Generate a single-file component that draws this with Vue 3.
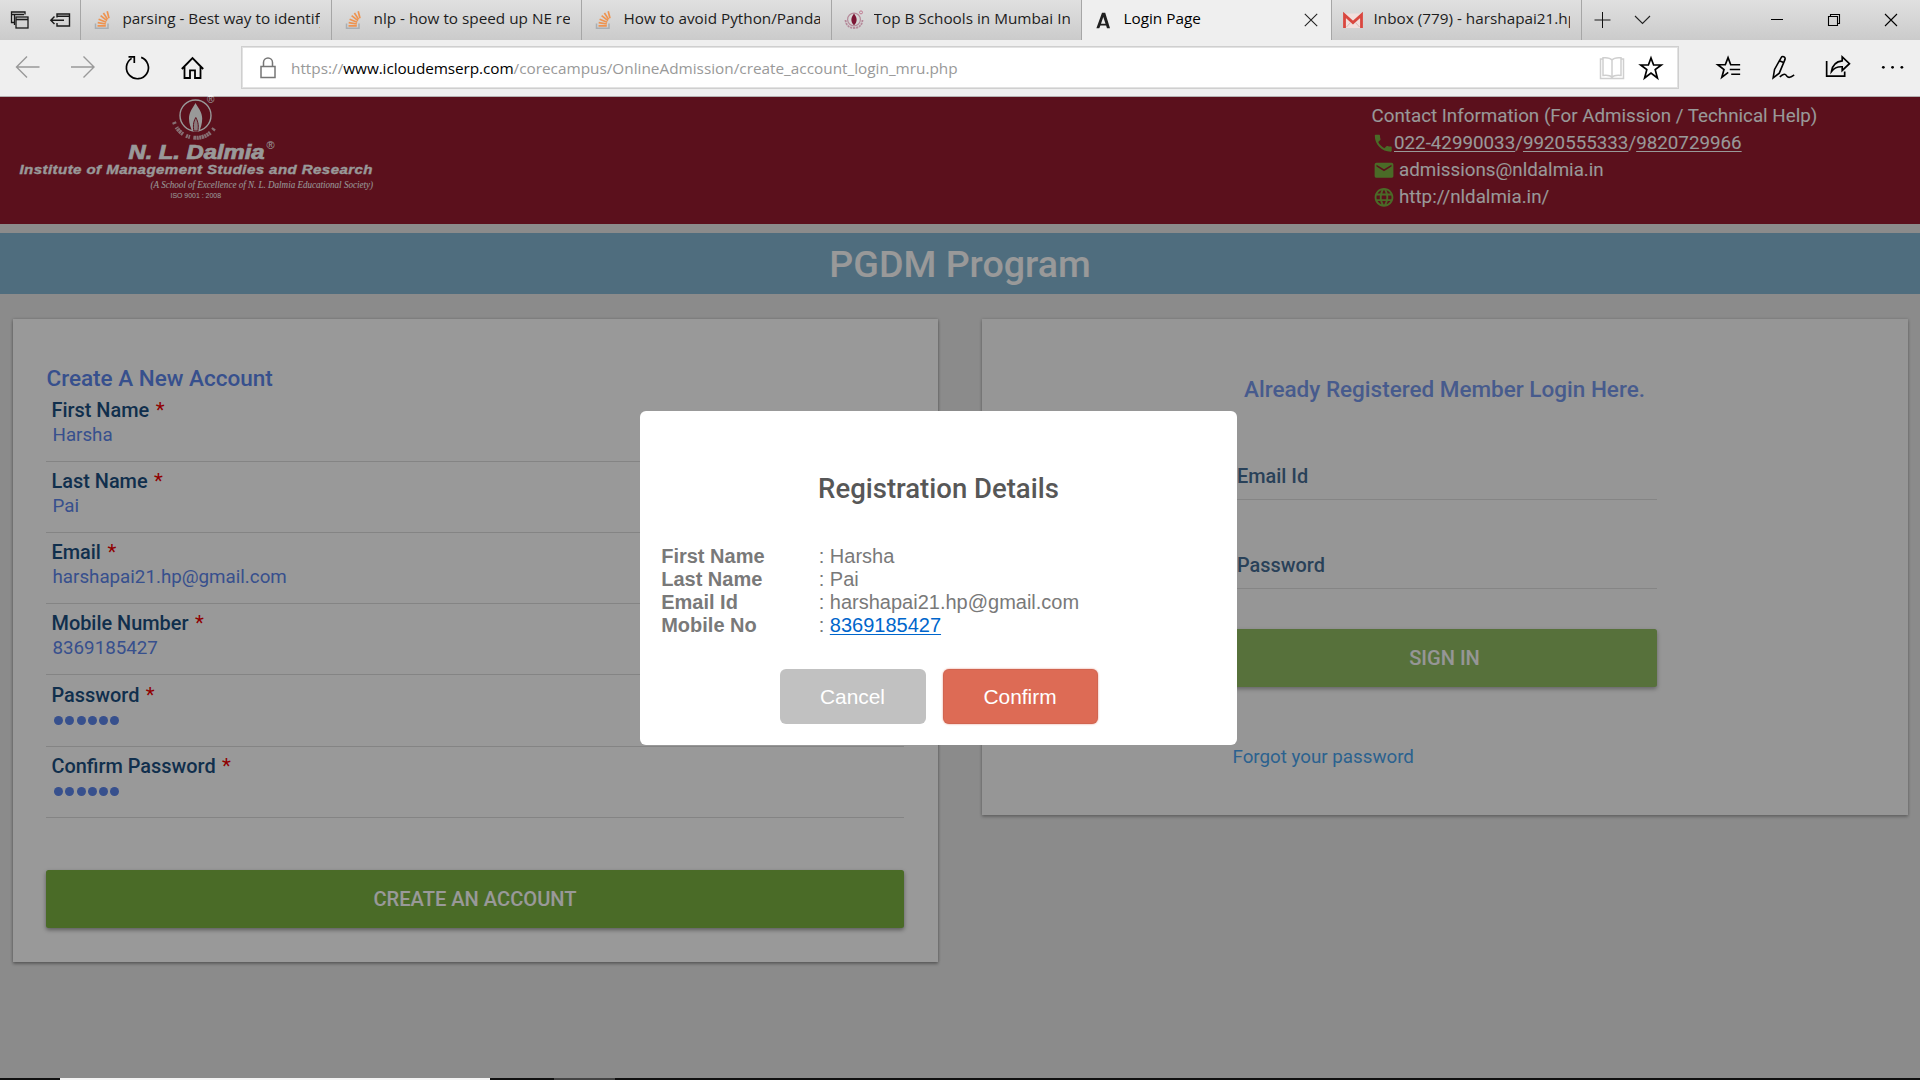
<script setup>
const tabs = [
  { icon: 'stack', title: 'parsing - Best way to identify', width: 251 },
  { icon: 'stack', title: 'nlp - how to speed up NE recognition', width: 250 },
  { icon: 'stack', title: 'How to avoid Python/Pandas', width: 250 },
  { icon: 'school', title: 'Top B Schools in Mumbai India', width: 250 },
  { icon: 'login', title: 'Login Page', width: 250, active: true },
  { icon: 'gmail', title: 'Inbox (779) - harshapai21.hp@gmail.com', width: 251 },
]

const fields = [
  { label: 'First Name', value: 'Harsha' },
  { label: 'Last Name', value: 'Pai' },
  { label: 'Email', value: 'harshapai21.hp@gmail.com' },
  { label: 'Mobile Number', value: '8369185427' },
  { label: 'Password', dots: 6 },
  { label: 'Confirm Password', dots: 6 },
]

const details = [
  { label: 'First Name', value: 'Harsha' },
  { label: 'Last Name', value: 'Pai' },
  { label: 'Email Id', value: 'harshapai21.hp@gmail.com' },
  { label: 'Mobile No', value: '8369185427', link: true },
]
</script>

<template>
  <div class="window">
    <header class="tabbar">
      <div class="tab-tools">
        <svg width="40" height="40" viewBox="0 0 40 40" fill="none" stroke="#1a1a1a" stroke-width="1.3">
          <path d="M14 22.5H11.5V12H25V14.5M11.5 14.5H24M14.5 25V14.8H15" />
          <rect x="16" y="17" width="12" height="11" /><path d="M16 19.5H28" stroke-width="1.6" />
        </svg>
        <svg width="40" height="40" viewBox="0 0 40 40" fill="none" stroke="#1a1a1a" stroke-width="1.4">
          <path d="M17 17.5V14H29.5V26H17V23M17 16.2H29.5M11 20.3H24M14.5 16.5L10.8 20.3L14.5 24" />
        </svg>
      </div>
      <div v-for="(tab, i) in tabs" :key="i" class="tab" :class="{ active: tab.active }" :style="{ width: tab.width + 'px' }">
        <svg v-if="tab.icon === 'stack'" class="favicon" width="20" height="20" viewBox="0 0 20 20" fill="none">
          <path d="M2.5 13.5V18.3H15V13.5" stroke="#a9aeb3" stroke-width="1.5" />
          <g stroke="#ee9350" stroke-width="1.7" transform="translate(-1)">
            <path d="M5.5 15.8H13.8M5.7 12.6L13.9 14M6.6 9.2L14.3 12.2M8.6 5.6L15 10.6M11.4 3L15.6 9.4M15.2 1.2L17 8.2" />
          </g>
        </svg>
        <svg v-else-if="tab.icon === 'school'" class="favicon" width="20" height="20" viewBox="0 0 20 20" fill="none">
          <circle cx="10" cy="9.5" r="6.4" stroke="#b68a9a" stroke-width="1.2" />
          <path d="M10 3.5C6.5 8 6.5 12 10 15.2C13.5 12 13.5 8 10 3.5Z" fill="#7d1635" />
          <path d="M1.5 10C2 15 5 18 10 18S18 15 18.5 10" stroke="#b5899a" stroke-width="1.8" stroke-dasharray="2.2 .8" />
          <circle cx="17" cy="2.4" r="1.5" stroke="#c07b93" />
        </svg>
        <svg v-else-if="tab.icon === 'login'" class="favicon" width="20" height="20" viewBox="0 0 20 20">
          <path fill="#202020" fill-rule="evenodd" d="M8 2.8H11.2L16 18.3H13L12.1 15.5H6.4L5.3 18.3H2.4ZM9.3 7L7 13.8H11.5Z" />
        </svg>
        <svg v-else class="favicon" width="22" height="20" viewBox="0 0 22 20">
          <rect x="0" y="3.5" width="20" height="14.5" rx="1" fill="#f2dfdd" />
          <path d="M1.5 18V5L10 12.6L18.5 5V18" fill="none" stroke="#d9473f" stroke-width="2.8" />
          <path d="M3.5 17L8 12M16.5 17L12 12" stroke="#d8b9b6" fill="none" />
        </svg>
        <span class="tab-title">{{ tab.title }}</span>
        <svg v-if="tab.active" class="tab-close" width="14" height="14" viewBox="0 0 14 14" stroke="#222" stroke-width="1.1"><path d="M.8.8L13.2 13.2M13.2.8L.8 13.2" /></svg>
      </div>
      <div class="tab-actions">
        <svg width="40" height="40" viewBox="0 0 40 40" fill="none"><path d="M12.5 20H28.5" stroke="#666" stroke-width="1.7" /><path d="M20.5 12V28" stroke="#111" /></svg>
        <svg width="40" height="40" viewBox="0 0 40 40" fill="none" stroke="#222" stroke-width="1.1"><path d="M13 16L20.5 23.5L28 16" /></svg>
      </div>
      <div class="win-controls">
        <svg width="57" height="40" viewBox="0 0 57 40"><path d="M22 19.5H34" stroke="#000" /></svg>
        <svg width="57" height="40" viewBox="0 0 57 40" fill="none" stroke="#000" stroke-width="1.1"><path d="M22.5 16.5H31.5V25.5H22.5ZM24.5 16.5V14.5H33.5V23.5H31.5" /></svg>
        <svg width="57" height="40" viewBox="0 0 57 40" stroke="#000" stroke-width="1.1"><path d="M22 14L34 26M34 14L22 26" /></svg>
      </div>
    </header>

    <nav class="toolbar">
      <div class="nav-icons">
        <svg width="55" height="54" viewBox="0 0 55 54" fill="none" stroke="#999" stroke-width="1.4"><path d="M39.5 27H17M27 16.5L16.5 27L27 37.5" /></svg>
        <svg width="55" height="54" viewBox="0 0 55 54" fill="none" stroke="#999" stroke-width="1.4"><path d="M16 27H38.5M28.5 16.5L39 27L28.5 37.5" /></svg>
        <svg width="55" height="54" viewBox="0 0 55 54" fill="none" stroke="#000" stroke-width="1.7"><path d="M31.2 17.4A11 11 0 1 1 21.6 18.4M18.5 16.8H24.3V23" /></svg>
        <svg width="55" height="54" viewBox="0 0 55 54" fill="none" stroke="#000" stroke-width="1.8"><path d="M16.8 29L27.5 18L38.2 29M19.5 27V38H25V30.3H30V38H35.5V27" /></svg>
      </div>
      <div class="address">
        <svg class="lock" width="16" height="22" viewBox="0 0 16 22" fill="none" stroke="#767676" stroke-width="1.5"><rect x="1" y="9.5" width="14" height="11" /><path d="M3.5 9.5V5.5a4.5 4.5 0 0 1 9 0V9.5" /></svg>
        <span class="url"><span class="scheme">https://</span><span class="host">www.icloudemserp.com</span><span class="path">/corecampus/OnlineAdmission/create_account_login_mru.php</span></span>
        <svg class="reader" width="26" height="24" viewBox="0 0 26 24" fill="none" stroke="#cfcfcf" stroke-width="1.5"><path d="M4 3H1.5V22.5H24.5V3H22M13 4C11 1.5 7 1.5 4 1.8V19.5C7 19.2 11 19 13 21.2C15 19 19 19.2 22 19.5V1.8C19 1.5 15 1.5 13 4ZM13 4V21" /></svg>
        <svg class="star" width="26" height="26" viewBox="0 0 26 26" fill="none" stroke="#000" stroke-width="1.7"><path d="M13 3L15.6 10H23.3L17.2 14.7L19.4 23L13 18L6.6 23L8.8 14.7L2.7 10H10.4Z" /></svg>
      </div>
      <div class="tool-icons">
        <svg width="54.5" height="54" viewBox="0 0 55 54" fill="none" stroke="#000" stroke-width="1.7"><path d="M27.5 32.5L21 37.5L23.2 29.5L17 24.7H24.5L27.3 17.5L30 24.7H39.5M29 29.5H39.5M30.5 34.3H39.5" /></svg>
        <svg width="54.5" height="54" viewBox="0 0 55 54" fill="none" stroke="#000" stroke-width="1.6"><path d="M17.3 38L18.7 29.5L25.4 17.5C26.5 15.5 30 16.7 29.3 19.3L23.5 33.2ZM23.5 20.6L28.5 22.6M17.3 38L23.5 33.2M24 37C28 33.5 29.5 33.7 31 36C33 38.5 34.5 37.5 38.5 35" /></svg>
        <svg width="54.5" height="54" viewBox="0 0 55 54" fill="none" stroke="#000" stroke-width="1.7"><path d="M16.8 21V36.2H35V31.5M32.5 16.8L39.8 23.7L32.5 30.5V26.8C27 26.5 24.3 28 21.7 31.5C22.5 25.5 26 21.5 32.5 20.8Z" /></svg>
        <svg width="54.5" height="54" viewBox="0 0 55 54"><g fill="#000"><circle cx="18.5" cy="27.3" r="1.4" /><circle cx="27.8" cy="27.3" r="1.4" /><circle cx="37.2" cy="27.3" r="1.4" /></g></svg>
      </div>
    </nav>

    <main class="page">
      <section class="banner">
        <svg class="logo" width="400" height="127" viewBox="0 0 400 127" fill="#fff">
          <circle cx="195.5" cy="18.5" r="15.5" fill="none" stroke="#fff" stroke-width="1.4" />
          <path d="M195.5 6C193 10.5 189 15 189 21.5C189 27 191 31 192 34H199.5C200.5 31 202.2 27 202.2 21.5C202.2 15 198 10.5 195.5 6Z" />
          <path d="M195.8 20.5C192.9 25.5 193.2 29.5 193.8 34H197.9C198.6 29.5 198.6 25.5 195.8 20.5Z" fill="#e6cdd1" stroke="#981c30" stroke-width="1" />
          <path d="M174 25C178 36 186 40.4 195.5 40.8S213.5 35.5 217.5 25" fill="none" stroke="#fff" stroke-opacity=".7" stroke-width="4" stroke-dasharray="2 3.6 1.6 .5 2.2 .5 2.4 .5 2 3.4 2 .6 1.6 3.4 2.6 .5 2.2 .5 2 .5 2.4 .5 2 .5 2 .5 2 3.5 2.2 20" />
          <text x="207" y="6" font-size="10" font-family="Liberation Sans, sans-serif">®</text>
          <g font-family="Liberation Sans, sans-serif" font-weight="700" font-style="italic" stroke="#fff">
            <text x="128.5" y="62" font-size="19.5" stroke-width=".7" textLength="136" lengthAdjust="spacingAndGlyphs">N. L. Dalmia</text>
            <text x="19.5" y="76.7" font-size="12.6" stroke-width=".3" letter-spacing=".35" textLength="353.5" lengthAdjust="spacingAndGlyphs">Institute of Management Studies and Research</text>
          </g>
          <text x="266.5" y="52" font-size="11" font-family="Liberation Sans, sans-serif">®</text>
          <text x="150.5" y="90.5" font-size="10" font-style="italic" font-family="Liberation Serif, serif" textLength="222.5" lengthAdjust="spacingAndGlyphs">(A School of Excellence of N. L. Dalmia Educational Society)</text>
          <text x="170.5" y="101" font-size="7" font-family="Liberation Sans, sans-serif" textLength="50.5" lengthAdjust="spacingAndGlyphs">ISO 9001 : 2008</text>
        </svg>
        <div class="contact">
          <div class="contact-row">Contact Information (For Admission / Technical Help)</div>
          <div class="contact-row">
            <svg class="ci tight" width="22.5" height="22.5" viewBox="0 0 24 24"><path d="M6.62 10.79c1.44 2.83 3.76 5.14 6.59 6.59l2.2-2.2c.27-.27.67-.36 1.02-.24 1.12.37 2.33.57 3.57.57.55 0 1 .45 1 1V20c0 .55-.45 1-1 1-9.39 0-17-7.61-17-17 0-.55.45-1 1-1h3.5c.55 0 1 .45 1 1 0 1.25.2 2.45.57 3.57.11.35.03.74-.25 1.02l-2.2 2.2z" /></svg>
            <span><a>022-42990033</a>/<a>9920555333</a>/<a>9820729966</a></span>
          </div>
          <div class="contact-row">
            <svg class="ci" width="24" height="22.5" viewBox="0 0 24 24"><path d="M20 4H4c-1.1 0-1.99.9-1.99 2L2 18c0 1.1.9 2 2 2h16c1.1 0 2-.9 2-2V6c0-1.1-.9-2-2-2zm0 4l-8 5-8-5V6l8 5 8-5v2z" /></svg>
            <span>admissions@nldalmia.in</span>
          </div>
          <div class="contact-row">
            <svg class="ci" width="24" height="22.5" viewBox="0 0 24 24"><path d="M11.99 2C6.47 2 2 6.48 2 12s4.47 10 9.99 10C17.52 22 22 17.52 22 12S17.52 2 11.99 2zm6.93 6h-2.95c-.32-1.25-.78-2.45-1.38-3.56 1.84.63 3.37 1.91 4.33 3.56zM12 4.04c.83 1.2 1.48 2.53 1.91 3.96h-3.82c.43-1.43 1.08-2.76 1.91-3.96zM4.26 14C4.1 13.36 4 12.69 4 12s.1-1.36.26-2h3.38c-.08.66-.14 1.32-.14 2 0 .68.06 1.34.14 2H4.26zm.82 2h2.95c.32 1.25.78 2.45 1.38 3.56-1.84-.63-3.37-1.9-4.33-3.56zm2.95-8H5.08c.96-1.66 2.49-2.93 4.33-3.56C8.81 5.55 8.35 6.75 8.03 8zM12 19.96c-.83-1.2-1.48-2.53-1.91-3.96h3.82c-.43 1.43-1.08 2.76-1.91 3.96zM14.34 14H9.66c-.09-.66-.16-1.32-.16-2 0-.68.07-1.35.16-2h4.68c.09.65.16 1.32.16 2 0 .68-.07 1.34-.16 2zm.25 5.56c.6-1.11 1.06-2.31 1.38-3.56h2.95c-.96 1.65-2.49 2.93-4.33 3.56zM16.36 14c.08-.66.14-1.32.14-2 0-.68-.06-1.34-.14-2h3.38c.16.64.26 1.31.26 2s-.1 1.36-.26 2h-3.38z" /></svg>
            <span>http://nldalmia.in/</span>
          </div>
        </div>
      </section>

      <h1 class="program">PGDM Program</h1>

      <div class="cards">
        <section class="card signup">
          <h2>Create A New Account</h2>
          <div v-for="f in fields" :key="f.label" class="field">
            <label>{{ f.label }} <i>*</i></label>
            <div v-if="f.dots" class="value dots"><b v-for="n in f.dots" :key="n"></b></div>
            <div v-else class="value">{{ f.value }}</div>
          </div>
          <button class="btn create">CREATE AN ACCOUNT</button>
        </section>

        <section class="card signin">
          <h2>Already Registered Member Login Here.</h2>
          <div class="login-field">Email Id</div>
          <div class="login-field">Password</div>
          <button class="btn">SIGN IN</button>
          <a class="forgot">Forgot your password</a>
        </section>
      </div>

      <div class="overlay">
        <div class="modal">
          <h3>Registration Details</h3>
          <dl>
            <div v-for="d in details" :key="d.label" class="detail">
              <dt>{{ d.label }}</dt>
              <dd>: <a v-if="d.link">{{ d.value }}</a><template v-else>{{ d.value }}</template></dd>
            </div>
          </dl>
          <div class="modal-actions">
            <button class="cancel">Cancel</button>
            <button class="confirm">Confirm</button>
          </div>
        </div>
      </div>
    </main>
    <footer class="taskbar"><span class="gap"></span><span class="light"></span><span class="gap"></span><span class="mid"></span></footer>
  </div>
</template>

<style>
html, body { margin: 0; overflow: hidden; background: #111; }
</style>

<style scoped>
* { box-sizing: border-box; }
.window { width: 1920px; height: 1080px; display: flex; flex-direction: column; font-family: Roboto, sans-serif; overflow: hidden; }
svg { flex: none; display: block; }

.tabbar { height: 40px; flex: none; display: flex; background: linear-gradient(#e0e0e0, #cbcbcb); font-family: "Open Sans", sans-serif; }
.tab-tools { width: 80px; display: flex; }
.tab { height: 40px; border-left: 1px solid #a6a6a6; display: flex; align-items: center; padding: 0 11px 0 11px; flex: none; }
.tab:nth-child(7) { border-right: 1px solid #a6a6a6; }
.tab.active { background: #efefef; border-left-color: #a6a6a6; padding-right: 13px; }
.favicon { width: 22px; height: 20px; }
.tab-title { flex: 1; margin-left: 8.5px; font-size: 15.3px; line-height: 37px; height: 40px; color: #1d1d1d; white-space: nowrap; overflow: hidden; }
.tab.active .tab-title { color: #000; }
.tab-actions { display: flex; }
.win-controls { display: flex; margin-left: auto; }

.toolbar { height: 57px; flex: none; background: #efefef; border-bottom: 1px solid #b5b0b1; display: flex; }
.nav-icons, .tool-icons { display: flex; }
.nav-icons { width: 241px; }
.tool-icons { margin-left: 22px; }
.address { margin-top: 6px; width: 1438px; height: 43px; border: 1px solid #cfcfcf; background: #fff; display: flex; align-items: center; font-family: "Open Sans", sans-serif; outline: 1px solid #e2e2e2; outline-offset: -2px; }
.lock { margin: 0 0 0 18px; }
.url { margin-left: 15px; font-size: 15.33px; line-height: 42px; color: #999; white-space: nowrap; flex: 1; }
.host { color: #000; letter-spacing: -.08px; }
.reader { margin-right: 13px; }
.star { margin-right: 14px; }

.page { flex: none; height: 981px; background: #e8e8e8; position: relative; }
.banner { height: 127px; background: #981c30; display: flex; justify-content: space-between; }
.logo { overflow: visible; }
.contact { width: 548.5px; padding-top: 6px; color: #fff; font-size: 18.78px; line-height: 27px; }
.contact-row { height: 27px; display: flex; align-items: center; white-space: pre; }
.contact-row a { text-decoration: underline; text-underline-offset: 2px; text-decoration-thickness: 1px; }
.ci { fill: #7cb342; margin-right: 3.5px; }
.ci.tight { margin-right: 0; }
.program { margin: 9px 0 0; height: 61px; background: #84b6d2; color: #fff; font-size: 37.6px; line-height: 63px; font-weight: 500; text-align: center; }

.cards { display: flex; align-items: flex-start; justify-content: space-between; padding: 25px 12px 0 13px; }
.card { background: #fff; box-shadow: 0 2px 3px rgba(0, 0, 0, .3), 0 0 3px rgba(0, 0, 0, .2); }
.card h2 { margin: 0; font-size: 22.5px; line-height: 26px; font-weight: 500; color: #5c85ec; }
.signup { width: 925px; height: 643px; padding: 46px 34px 0 33px; }
.signup h2 { margin-bottom: 7px; padding-left: .5px; }
.field { height: 64px; border-bottom: 1px solid #dcdcdc; margin-bottom: 7px; padding: 1px 0 0 5.5px; }
.field:nth-of-type(5) { margin-top: 8px; }
.field label { display: block; font-size: 19.9px; line-height: 24px; font-weight: 500; color: #1c4f80; white-space: pre; }
.field label i { color: #f00000; font-style: normal; font-weight: 400; margin-left: 1.5px; font-size: 20.5px; line-height: 20px; }
.value { font-size: 18.75px; line-height: 24px; padding-left: 1px; color: #5c85ec; }
.dots { display: flex; gap: 2.3px; padding: 8px 0 0 2.5px; }
.dots b { width: 9px; height: 9px; border-radius: 50%; background: #5c85ec; }
.btn { display: block; width: 100%; height: 58px; border: 0; border-radius: 2.5px; padding: 0; background: #7cb342; color: #fff; font: 500 20.1px/58px Roboto, sans-serif; box-shadow: 0 2px 4px rgba(0, 0, 0, .4); }
.create { margin-top: 52px; }
.signin { width: 926px; height: 496px; padding: 57px 251px 0 250px; opacity: .8; }
.signin h2 { text-align: center; margin-bottom: 62px; }
.login-field { height: 36px; font-size: 19.9px; line-height: 26px; font-weight: 500; color: #1c4f80; padding-left: 5px; border-bottom: 1px solid #dcdcdc; margin-bottom: 53px; }
.signin .btn { margin-top: -13px; }
.forgot { display: block; margin-top: 58px; padding-left: .5px; font-size: 18.75px; line-height: 24px; color: #2192f0; }

.overlay { position: absolute; inset: 0; background: rgba(0, 0, 0, .4); display: flex; justify-content: center; align-items: flex-start; padding: 314px 43px 0 0; }
.modal { width: 597px; height: 334px; background: #fff; border-radius: 6px; padding: 61.5px 20px 0; }
.modal h3 { margin: 0 0 40px; font-size: 27.5px; line-height: 32px; font-weight: 500; color: #575757; text-align: center; }
.modal dl { margin: 0; padding-left: 1.2px; font: 20px/23px "Liberation Sans", Arial, sans-serif; color: #797979; }
.detail { display: flex; }
.detail dt { width: 157.5px; font-weight: 700; }
.detail dd { margin: 0; }
.detail a { color: #0066cc; text-decoration: underline; text-underline-offset: 2px; text-decoration-thickness: 1px; }
.modal-actions { display: flex; justify-content: center; gap: 17px; margin-top: 32.5px; }
.modal-actions button { height: 55px; border: 0; border-radius: 6px; padding: 0; color: #fff; font: 20.9px/55px "Liberation Sans", Arial, sans-serif; }
.cancel { width: 146px; background: #c1c1c1; }
.confirm { width: 155px; background: #dd6b55; box-shadow: 0 0 2px rgba(221, 107, 85, .8), inset 0 0 0 1px rgba(0, 0, 0, .05); }

.taskbar { height: 2px; flex: none; display: flex; background: #101010; }
.taskbar .gap { width: 60px; }
.taskbar .gap + .light { width: 430px; background: #f4f4f4; }
.taskbar .light + .gap { width: 64px; }
.taskbar .mid { width: 61px; background: #444; }
</style>
